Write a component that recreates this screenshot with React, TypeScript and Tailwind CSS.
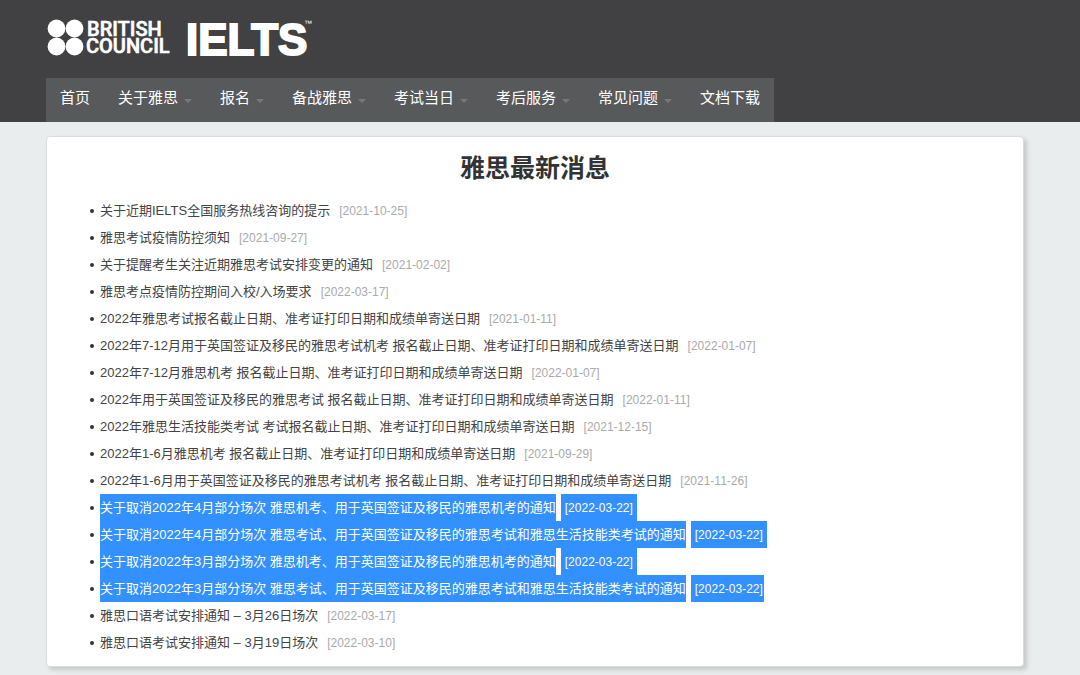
import React from "react";

const NAV_ITEMS = [
  { label: "首页", hasMenu: false },
  { label: "关于雅思", hasMenu: true },
  { label: "报名", hasMenu: true },
  { label: "备战雅思", hasMenu: true },
  { label: "考试当日", hasMenu: true },
  { label: "考后服务", hasMenu: true },
  { label: "常见问题", hasMenu: true },
  { label: "文档下载", hasMenu: false },
];

const NEWS = [
  { title: "关于近期IELTS全国服务热线咨询的提示", date: "2021-10-25" },
  { title: "雅思考试疫情防控须知", date: "2021-09-27" },
  { title: "关于提醒考生关注近期雅思考试安排变更的通知", date: "2021-02-02" },
  { title: "雅思考点疫情防控期间入校/入场要求", date: "2022-03-17" },
  { title: "2022年雅思考试报名截止日期、准考证打印日期和成绩单寄送日期", date: "2021-01-11" },
  { title: "2022年7-12月用于英国签证及移民的雅思考试机考 报名截止日期、准考证打印日期和成绩单寄送日期", date: "2022-01-07" },
  { title: "2022年7-12月雅思机考 报名截止日期、准考证打印日期和成绩单寄送日期", date: "2022-01-07" },
  { title: "2022年用于英国签证及移民的雅思考试 报名截止日期、准考证打印日期和成绩单寄送日期", date: "2022-01-11" },
  { title: "2022年雅思生活技能类考试 考试报名截止日期、准考证打印日期和成绩单寄送日期", date: "2021-12-15" },
  { title: "2022年1-6月雅思机考 报名截止日期、准考证打印日期和成绩单寄送日期", date: "2021-09-29" },
  { title: "2022年1-6月用于英国签证及移民的雅思考试机考 报名截止日期、准考证打印日期和成绩单寄送日期", date: "2021-11-26" },
  { title: "关于取消2022年4月部分场次 雅思机考、用于英国签证及移民的雅思机考的通知", date: "2022-03-22", selected: true },
  { title: "关于取消2022年4月部分场次 雅思考试、用于英国签证及移民的雅思考试和雅思生活技能类考试的通知", date: "2022-03-22", selected: true },
  { title: "关于取消2022年3月部分场次 雅思机考、用于英国签证及移民的雅思机考的通知", date: "2022-03-22", selected: true },
  { title: "关于取消2022年3月部分场次 雅思考试、用于英国签证及移民的雅思考试和雅思生活技能类考试的通知", date: "2022-03-22", selected: true },
  { title: "雅思口语考试安排通知 – 3月26日场次", date: "2022-03-17" },
  { title: "雅思口语考试安排通知 – 3月19日场次", date: "2022-03-10" },
];

// The selection stops right after the last selected date
const SELECTION_END = NEWS.filter((item) => item.selected).length + NEWS.findIndex((item) => item.selected) - 1;

function Logo() {
  return (
    <svg width="280" height="62" viewBox="0 -8 280 62" fill="#fff" role="img" aria-label="British Council IELTS">
      <circle cx="10.5" cy="12.5" r="8.9" />
      <circle cx="28.5" cy="12.5" r="8.9" />
      <circle cx="10.5" cy="30.5" r="8.9" />
      <circle cx="28.5" cy="30.5" r="8.9" />
      <g fontFamily="Roboto, sans-serif" fontSize="20" fontWeight="500" stroke="#fff" strokeWidth="0.6">
        <text x="41" y="20">BRITISH</text>
        <text x="40" y="37">COUNCIL</text>
      </g>
      <text
        x="140"
        y="39"
        fontFamily="'Liberation Sans', Arial, sans-serif"
        fontSize="44"
        fontWeight="700"
        stroke="#fff"
        strokeWidth="2"
      >
        IELTS
      </text>
      <text x="258" y="10" fontFamily="'Liberation Sans', Arial, sans-serif" fontSize="8">
        ™
      </text>
    </svg>
  );
}

function Navigation() {
  return (
    <nav className="flex w-fit bg-[#58595b]">
      {NAV_ITEMS.map((item) => (
        <a
          key={item.label}
          href="#"
          className="flex h-11 items-center gap-1.5 px-3.5 pb-1 text-[15px] whitespace-nowrap text-white"
        >
          {item.label}
          {item.hasMenu && (
            <svg width="8" height="4" viewBox="0 0 8 4" fill="#77787a" className="mt-1.5" aria-hidden="true">
              <path d="M0 0h8L4 4z" />
            </svg>
          )}
        </a>
      ))}
    </nav>
  );
}

export default function App() {
  return (
    <div className="min-h-screen bg-[#e9edee] pb-2 font-['Liberation_Sans','Noto_Sans_CJK_SC',sans-serif] text-[#333]">
      {/* Header */}
      <header className="bg-[#414042] px-[46px] pt-2">
        <a href="#" className="mb-2 block w-fit">
          <Logo />
        </a>
        <Navigation />
      </header>

      {/* News list */}
      <main className="mt-3.5 mr-14 ml-[46px] rounded border border-[#dcdcdc] bg-white pt-3 pb-2.5 shadow-[3px_3px_4px_#c8c8c8]">
        <h1 className="text-center text-[25px] leading-[38px] font-bold">雅思最新消息</h1>
        <ul className="mt-2.5 pl-[53px]">
          {NEWS.map((item, index) => (
            <li
              key={item.title}
              className="flex h-[27px] items-center text-[13px] leading-[27px] whitespace-nowrap before:mr-1.5 before:-ml-2.5 before:size-1 before:rounded-full before:bg-[#333]"
            >
              <a href="#" className={item.selected ? "bg-[#3390ff] text-white" : "text-[#444]"}>
                {item.title}
              </a>
              <span
                className={`ml-[5px] pt-0.5 pl-1 text-[12px] leading-[25px] ${
                  item.selected ? "bg-[#3390ff] text-white" : "text-[#aaa]"
                } ${index === SELECTION_END ? "pr-px" : "pr-1"}`}
              >
                [{item.date}]
              </span>
            </li>
          ))}
        </ul>
      </main>
    </div>
  );
}
